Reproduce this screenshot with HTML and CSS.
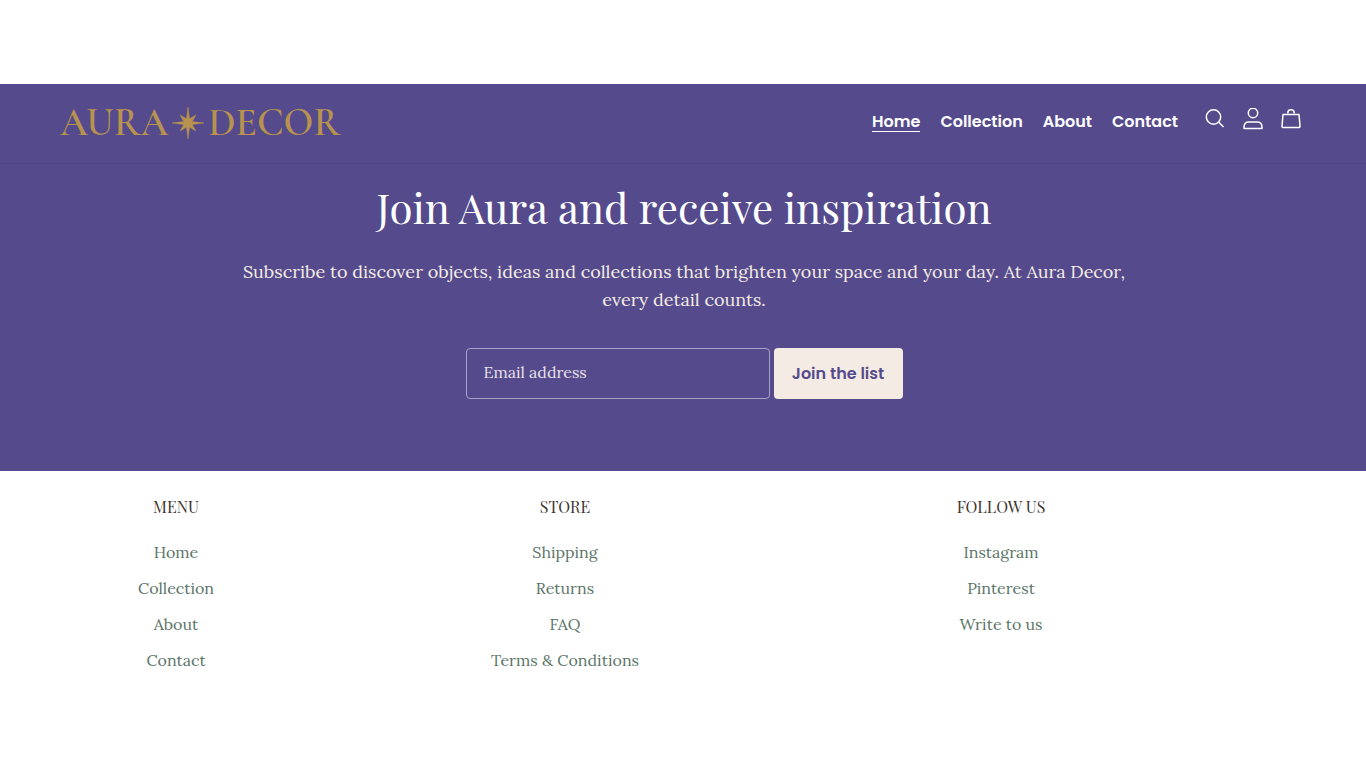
FILE: index.html
```html
<!DOCTYPE html>
<html lang="en">
<head>
    <meta charset="UTF-8">
    <meta name="viewport" content="width=device-width, initial-scale=1.0">
    <title>Aura Decor</title>
    <link rel="stylesheet" href="styles.css">
</head>
<body>
    <header class="header">
        <a href="#" class="logo" aria-label="Aura Decor">
            <span>AURA</span>
            <svg class="star" viewBox="0 0 32 32" aria-hidden="true">
                <path d="M16 0L17.500 11.800L24 8L20.200 14.500L32 16L20.200 17.500L24 24L17.500 20.200L16 32L14.500 20.200L8 24L11.800 17.500L0 16L11.800 14.500L8 8L14.500 11.800z" fill="currentColor" stroke="currentColor" stroke-width=".5"/>
            </svg>
            <span>DECOR</span>
        </a>
        <nav class="nav">
            <a href="#" class="active">Home</a>
            <a href="#">Collection</a>
            <a href="#">About</a>
            <a href="#">Contact</a>
        </nav>
        <div class="icons">
            <a href="#" aria-label="Search">
                <svg viewBox="0 0 22 22"><circle cx="9.500" cy="9" r="7.200"/><path d="M14.800 14.300l4.700 4.700"/></svg>
            </a>
            <a href="#" aria-label="Account">
                <svg viewBox="0 0 22 22"><circle cx="11" cy="5" r="4.700"/><path d="M2 20.500v-1.500c0-3 2-5 5-5h8c3 0 5 2 5 5v1.500z"/></svg>
            </a>
            <a href="#" aria-label="Cart">
                <svg viewBox="0 0 22 22"><path d="M3 6.500h16l1 11.500q.1 1.500-1.500 1.500h-15Q1.900 19.500 2 18z"/><path d="M7.800 5.500V5a3.200 3.200 0 0 1 6.400 0v.5"/></svg>
            </a>
        </div>
    </header>

    <section class="newsletter">
        <h1>Join Aura and receive inspiration</h1>
        <p>Subscribe to discover objects, ideas and collections that brighten your space and your day. At Aura Decor, every detail counts.</p>
        <form class="signup">
            <input type="email" placeholder="Email address" aria-label="Email address">
            <button type="submit">Join the list</button>
        </form>
    </section>

    <footer class="footer">
        <div class="column">
            <h2>MENU</h2>
            <ul>
                <li><a href="#">Home</a></li>
                <li><a href="#">Collection</a></li>
                <li><a href="#">About</a></li>
                <li><a href="#">Contact</a></li>
            </ul>
        </div>
        <div class="column">
            <h2>STORE</h2>
            <ul>
                <li><a href="#">Shipping</a></li>
                <li><a href="#">Returns</a></li>
                <li><a href="#">FAQ</a></li>
                <li><a href="#">Terms &amp; Conditions</a></li>
            </ul>
        </div>
        <div class="column">
            <h2>FOLLOW US</h2>
            <ul>
                <li><a href="#">Instagram</a></li>
                <li><a href="#">Pinterest</a></li>
                <li><a href="#">Write to us</a></li>
            </ul>
        </div>
    </footer>
</body>
</html>
```
FILE: styles.css
```css
* {
    box-sizing: border-box;
}
body {
    margin: 0;
    padding-top: 84px;
    background-color: #fff;
    font-family: Lora, "Liberation Serif", serif;
    font-size: 16px;
}
a {
    color: inherit;
    text-decoration: none;
}
.header {
    display: flex;
    align-items: center;
    height: 80px;
    padding: 0 64px 2px 60px;
    background-color: #554b8c;
    border-bottom: 1px solid #514787;
    color: #fff;
}
.logo {
    display: flex;
    align-items: center;
    gap: 4px;
    margin-right: auto;
    color: #b8924f;
    font-family: "Cormorant Garamond", "Liberation Serif", serif;
    font-size: 39px;
    font-weight: 600;
    line-height: 40px;
}
.star {
    width: 32px;
    height: 32px;
}
.nav {
    display: flex;
    gap: 20px;
    font-family: Poppins, Inter, sans-serif;
    font-size: 16px;
    font-weight: 600;
    line-height: 18px;
}
.nav .active {
    border-bottom: 1px solid #fff;
}
.icons {
    display: flex;
    gap: 16px;
    margin-left: 26px;
    padding-bottom: 8px;
}
.icons a, .icons svg {
    display: block;
    width: 22px;
    height: 22px;
}
.icons svg {
    fill: none;
    stroke: #fff;
    stroke-width: 1.5;
    stroke-linejoin: round;
}
.newsletter {
    padding: 16px 20px 72px 22px;
    background-color: #554b8c;
    color: #fff;
    text-align: center;
}
.newsletter h1 {
    margin: 0 0 24px;
    font-family: "Playfair Display", "Liberation Serif", serif;
    font-size: 42px;
    font-weight: 400;
    line-height: 54px;
}
.newsletter p {
    max-width: 900px;
    margin: 0 auto 34px;
    color: #f4ece4;
    font-size: 18px;
    line-height: 28px;
}
.signup {
    display: flex;
    justify-content: center;
    gap: 4px;
}
.signup input {
    width: 304px;
    height: 51px;
    padding: 0 17px 4px;
    border: 1px solid #a9a2c8;
    border-radius: 4px;
    background: transparent;
    color: #f4ece4;
    font-family: inherit;
    font-size: 16px;
}
.signup input::placeholder {
    color: #e9e2ea;
}
.signup button {
    width: 129px;
    padding: 0;
    border: 0;
    border-radius: 4px;
    background-color: #f4ece4;
    color: #554b8c;
    font-family: Poppins, Inter, sans-serif;
    font-size: 16px;
    font-weight: 600;
}
.footer {
    display: grid;
    grid-template-columns: 352fr 426fr 446fr 142fr;
    padding: 24px 0;
    text-align: center;
}
.column h2 {
    margin: 0 0 15px;
    color: #40352f;
    font-family: "Playfair Display", "Liberation Serif", serif;
    font-size: 16px;
    font-weight: 400;
    line-height: 24px;
}
.column ul {
    margin: 0;
    padding: 0;
    list-style: none;
}
.column li {
    color: #5b7568;
    line-height: 36px;
}
```
